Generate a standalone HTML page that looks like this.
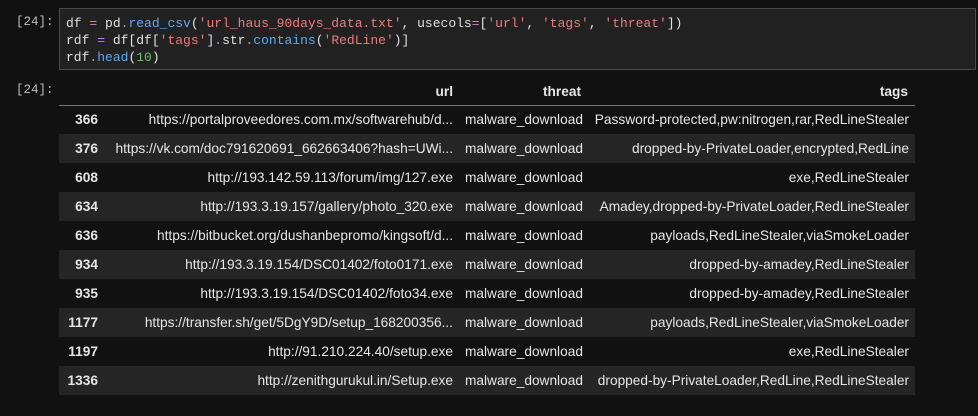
<!DOCTYPE html>
<html><head><meta charset="utf-8"><style>
body{margin:0;background:#111111;width:978px;height:416px;overflow:hidden;font-family:"Liberation Sans",Arial,sans-serif;color:#e6e6e6;position:relative}
.prompt{position:absolute;left:16px;font-family:"Liberation Mono",monospace;font-size:12.5px;color:#bdbdbd}
.code{position:absolute;left:59px;top:8px;width:915px;height:60px;background:#212121;border:1px solid #4a4a4a}
.code pre{margin:0;position:absolute;left:6px;top:6px;font-family:"Liberation Mono",monospace;font-size:13px;line-height:17px;color:#e0e0e0}
.s{color:#f07a7a}.f{color:#5aa9f0}.o{color:#c77dff}.n{color:#6bc46b}
table{position:absolute;left:59px;top:78px;border-collapse:collapse;font-size:13.7px;table-layout:fixed;width:856px}
td,th{text-align:right;padding:0 6px;height:29px;white-space:nowrap;overflow:visible;box-sizing:border-box}
th{font-weight:bold;height:27px;border-bottom:1px solid #777}
td.i{font-weight:bold}
tr:nth-child(even) td{background:#252525}
tr:nth-child(odd) td{background:#111111}
</style></head><body>
<div class="prompt" style="top:15px">[24]:</div>
<div class="code"><pre>df <span class="o">=</span> pd<span class="o">.</span><span class="f">read_csv</span>(<span class="s">'url_haus_90days_data.txt'</span>, usecols<span class="o">=</span>[<span class="s">'url'</span>, <span class="s">'tags'</span>, <span class="s">'threat'</span>])
rdf <span class="o">=</span> df[df[<span class="s">'tags'</span>]<span class="o">.</span>str<span class="o">.</span><span class="f">contains</span>(<span class="s">'RedLine'</span>)]
rdf<span class="o">.</span><span class="f">head</span>(<span class="n">10</span>)</pre></div>
<div class="prompt" style="top:83px">[24]:</div>
<table>
<colgroup><col style="width:45px"><col style="width:355px"><col style="width:128px"><col style="width:328px"></colgroup>
<thead><tr><th></th><th>url</th><th>threat</th><th style="padding-right:7px">tags</th></tr></thead>
<tbody>
<tr><td class="i">366</td><td>https://portalproveedores.com.mx/softwarehub/d...</td><td>malware_download</td><td>Password-protected,pw:nitrogen,rar,RedLineStealer</td></tr>
<tr><td class="i">376</td><td>https://vk.com/doc791620691_662663406?hash=UWi...</td><td>malware_download</td><td>dropped-by-PrivateLoader,encrypted,RedLine</td></tr>
<tr><td class="i">608</td><td>http://193.142.59.113/forum/img/127.exe</td><td>malware_download</td><td>exe,RedLineStealer</td></tr>
<tr><td class="i">634</td><td>http://193.3.19.157/gallery/photo_320.exe</td><td>malware_download</td><td>Amadey,dropped-by-PrivateLoader,RedLineStealer</td></tr>
<tr><td class="i">636</td><td>https://bitbucket.org/dushanbepromo/kingsoft/d...</td><td>malware_download</td><td>payloads,RedLineStealer,viaSmokeLoader</td></tr>
<tr><td class="i">934</td><td>http://193.3.19.154/DSC01402/foto0171.exe</td><td>malware_download</td><td>dropped-by-amadey,RedLineStealer</td></tr>
<tr><td class="i">935</td><td>http://193.3.19.154/DSC01402/foto34.exe</td><td>malware_download</td><td>dropped-by-amadey,RedLineStealer</td></tr>
<tr><td class="i">1177</td><td>https://transfer.sh/get/5DgY9D/setup_168200356...</td><td>malware_download</td><td>payloads,RedLineStealer,viaSmokeLoader</td></tr>
<tr><td class="i">1197</td><td>http://91.210.224.40/setup.exe</td><td>malware_download</td><td>exe,RedLineStealer</td></tr>
<tr><td class="i">1336</td><td>http://zenithgurukul.in/Setup.exe</td><td>malware_download</td><td>dropped-by-PrivateLoader,RedLine,RedLineStealer</td></tr>
</tbody></table>
</body></html>
